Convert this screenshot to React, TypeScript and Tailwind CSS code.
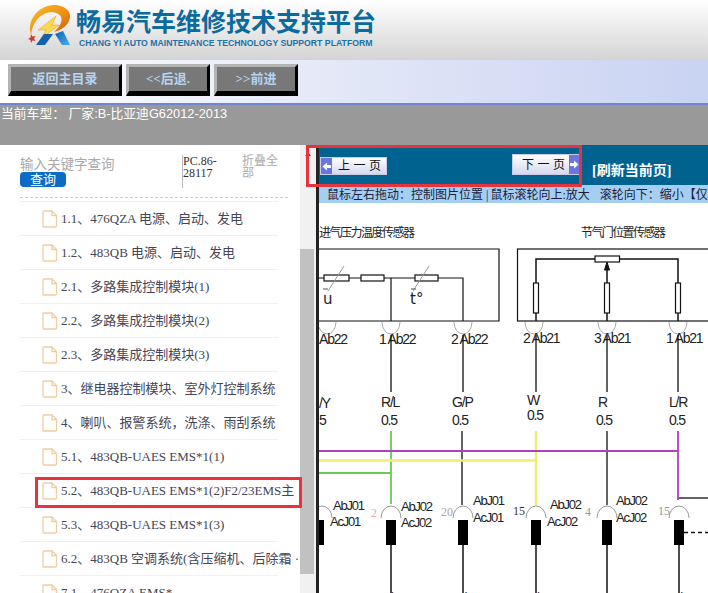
import React from "react";

const items = [
  "1.1、476QZA 电源、启动、发电",
  "1.2、483QB 电源、启动、发电",
  "2.1、多路集成控制模块(1)",
  "2.2、多路集成控制模块(2)",
  "2.3、多路集成控制模块(3)",
  "3、继电器控制模块、室外灯控制系统",
  "4、喇叭、报警系统，洗涤、雨刮系统",
  "5.1、483QB-UAES EMS*1(1)",
  "5.2、483QB-UAES EMS*1(2)F2/23EMS主",
  "5.3、483QB-UAES EMS*1(3)",
  "6.2、483QB 空调系统(含压缩机、后除霜 ·",
  "7.1、476QZA EMS*",
];

const serif = "font-['Liberation_Serif','Noto_Sans_CJK_SC',serif]";

function Logo() {
  return (
    <svg width="50" height="44" viewBox="0 0 50 44" className="shrink-0">
      <defs>
        <linearGradient id="ring" x1="0" y1="0" x2="1" y2="1">
          <stop offset="0" stopColor="#f9c22a" />
          <stop offset="0.6" stopColor="#ee8a12" />
          <stop offset="1" stopColor="#c04f18" />
        </linearGradient>
        <linearGradient id="blue" x1="0" y1="0" x2="1" y2="1">
          <stop offset="0" stopColor="#0b5fb0" />
          <stop offset="1" stopColor="#4bb0ee" />
        </linearGradient>
      </defs>
      <path d="M5 30C0 14 14 0 28 0 38 0 45 6 44 12 43 20 36 25 28 27 33 22 37 17 35 12 33 7 24 6 18 9 10 13 6 21 5 30Z" fill="url(#ring)" />
      <path d="M12 25 30 11 26 20h7L15 34l5-9Z" fill="#fbd84e" stroke="#f2a824" strokeWidth="0.6" />
      <path d="M5 29l1.500 2.500 3-.5-1.500 2.500 1.500 2.500-3-.5-1.500 2.500-.5-3-2.500-1 2.500-1.500Z" fill="#d8392b" />
      <path d="M10 40 18 29h9l-8 11Z" fill="#1460ae" />
      <path d="M29 29l8-3 7 14h-8Z" fill="url(#blue)" />
    </svg>
  );
}

function Button({ label, className }: { label: string; className: string }) {
  return (
    <div
      className={`${className} h-8 flex items-center justify-center bg-[#787878] border-l-[3px] border-t-[3px] border-r-[3px] border-b-[5px] border-l-[#b4b4b4] border-t-[#b4b4b4] border-r-black border-b-black text-[13px] font-bold text-[#b5d3f2] ${serif}`}
    >
      {label}
    </div>
  );
}

function Row({ text }: { text: string }) {
  return (
    <div className="h-[34px] ml-5 w-[258px] flex items-center border-b border-[#f0f0f0]">
      <svg width="16" height="18" viewBox="0 0 16 18" fill="none" stroke="#f2cda0" strokeWidth="1.3" className="ml-[22px] mr-[3px] shrink-0">
        <path d="M2 1h8l4.500 4.500V16a1 1 0 0 1-1 1H2a1 1 0 0 1-1-1V2a1 1 0 0 1 1-1Z" />
        <path d="M10 1v4.500h4.500" />
      </svg>
      <span className={`whitespace-nowrap text-[13px] text-[#454555] ${serif}`}>{text}</span>
    </div>
  );
}

function Diagram() {
  const t = "fill-[#222]";
  const label = (x: number, y: number, s: string, size = 14) => (
    <text x={x} y={y} fontSize={size} letterSpacing={-1.2} fontFamily="'Liberation Sans', sans-serif" className={t}>{s}</text>
  );
  const arcDown = (x: number) => (
    <path d={`M${x - 9} 322a9 12 0 0 0 18 0`} fill="none" stroke="#aaa" />
  );
  const arcUp = (x: number) => (
    <path d={`M${x - 10} 518a10 12 0 0 1 20 0`} fill="none" stroke="#999" />
  );
  const plug = (x: number) => (
    <g key={x}>
      <rect x={x - 5} y={520} width={10} height={25} fill="#000" />
      <path d={`M${x} 545V593`} stroke="#000" strokeWidth={1.4} />
    </g>
  );
  const vres = (x: number) => <rect x={x - 2.500} y={283} width={5} height={30} fill="#fff" stroke="#111" strokeWidth={1.2} />;
  const hres = (a: number, b: number) => <rect x={a} y={275} width={b - a} height={6} fill="#fff" stroke="#111" strokeWidth={1.2} />;
  return (
    <svg viewBox="319 203 389 390" width="389" height="390" className="block">
      <text x="319" y="237" fontSize="12" letterSpacing="-1.5" fontFamily="'Noto Sans CJK SC', sans-serif" className={t}>进气压力温度传感器</text>
      <text x="581" y="237" fontSize="12" letterSpacing="-1.6" fontFamily="'Noto Sans CJK SC', sans-serif" className={t}>节气门位置传感器</text>
      <g fill="none" stroke="#111" strokeWidth="1.200">
        <path d="M318 249H499V321H318" />
        <rect x="517.500" y="249" width="200" height="72" />
        <path d="M318 278H463V321M391 278V321" />
        <path d="M536 321V259H678V321M607 321V265" strokeWidth="1.500" />
      </g>
      {hres(324, 349)}
      {hres(361, 384)}
      {hres(415, 438)}
      <path d="M328 291 344 266M413 291 429 266" stroke="#999" />
      <path d="M323 289h5M411 289h5" stroke="#555" />
      <rect x="595" y="256" width="24.500" height="6" fill="#fff" stroke="#111" strokeWidth="1.200" />
      <path d="M607 262l-2.500 8h5Z" fill="#111" stroke="#111" />
      {vres(536)}
      {vres(607)}
      {vres(678)}
      <text x="323" y="304" fontSize="15" fontFamily="'DejaVu Sans', sans-serif" className={t}>u</text>
      <text x="410" y="304" fontSize="15" fontFamily="'DejaVu Sans', sans-serif" className={t}>t°</text>
      {arcDown(327)}
      {arcDown(391)}
      {arcDown(463)}
      {arcDown(534)}
      {arcDown(607)}
      {arcDown(678)}
      {label(319, 344, "Ab22")}
      {label(379, 344, "1 Ab22")}
      {label(451, 344, "2 Ab22")}
      {label(523, 343, "2 Ab21")}
      {label(594, 343, "3 Ab21")}
      {label(666, 343, "1 Ab21")}
      <g fill="none" stroke="#111" strokeWidth="1.300">
        <path d="M391 335V392M463 335V392M536 335V392M607 335V392M678 335V392" />
        <path d="M462 431V505M607 431V505" />
        <path d="M678 498H708" />
        <path d="M684 532.500H708" strokeDasharray="4 3" />
      </g>
      {label(319, 408, "/Y")}
      {label(319, 425, "5")}
      {label(381, 407, "R/L")}
      {label(381, 425, "0.5")}
      {label(452, 407, "G/P")}
      {label(452, 425, "0.5")}
      {label(527, 405, "W")}
      {label(527, 420, "0.5")}
      {label(598, 407, "R")}
      {label(596, 425, "0.5")}
      {label(669, 407, "L/R")}
      {label(669, 425, "0.5")}
      <path d="M391 431V504M318 473H391" stroke="#66cc55" strokeWidth="1.800" fill="none" />
      <path d="M536 431V505M318 460.500H536" stroke="#f0ee70" strokeWidth="2.500" fill="none" />
      <path d="M678 431V500M318 451H678" stroke="#b040c0" strokeWidth="1.800" fill="none" />
      {arcUp(322)}
      {arcUp(391)}
      {arcUp(463)}
      {arcUp(536)}
      {arcUp(607)}
      {arcUp(679)}
      <rect x="318" y="520" width="6" height="25" fill="#000" />
      {plug(391)}
      {plug(463)}
      {plug(536)}
      {plug(607)}
      {plug(679)}
      {label(333, 510, "AbJ01", 13)}
      {label(330, 526, "AcJ01", 13)}
      {label(401, 511, "AbJ02", 13)}
      {label(401, 527, "AcJ02", 13)}
      {label(473, 505, "AbJ01", 13)}
      {label(473, 522, "AcJ01", 13)}
      {label(550, 509, "AbJ02", 13)}
      {label(547, 526, "AcJ02", 13)}
      {label(616, 505, "AbJ02", 13)}
      {label(616, 522, "AcJ02", 13)}
      <g fontSize="12" fontFamily="'Liberation Serif', serif">
        <text x="371" y="517" fill="#e8a8a0">2</text>
        <text x="441" y="516" fill="#aaa">20</text>
        <text x="513" y="515" fill="#333">15</text>
        <text x="585" y="516" fill="#999">4</text>
        <text x="658" y="515" fill="#999">15</text>
      </g>
      {label(322, 603, "Y")}
      {label(381, 603, "B/L")}
      {label(453, 603, "G/B")}
      {label(527, 603, "Y/")}
      {label(601, 603, "R")}
      {label(672, 603, "L/R")}
    </svg>
  );
}

function Arrow({ left }: { left?: boolean }) {
  return (
    <div className="w-[11px] h-full shrink-0 bg-[#6a75e0] flex items-center justify-center">
      <svg width="9" height="9" viewBox="0 0 9 9" fill="#fff" className={left ? "rotate-180" : ""}>
        <path d="M0 3h4V0.500L8.500 4.500 4 8.500V6H0Z" />
      </svg>
    </div>
  );
}

export default function App() {
  return (
    <div className="relative w-[708px] h-[593px] overflow-hidden bg-white flex flex-col">
      <header className="h-[60px] shrink-0 flex bg-gradient-to-b from-[#ffffff] to-[#d4d4d4] pl-[26px] pt-[5px]">
        <Logo />
        <div className="flex flex-col">
          <div className="text-[25px] leading-[30px] font-bold text-[#0b6a9e] font-['Noto_Sans_CJK_SC',sans-serif] whitespace-nowrap">畅易汽车维修技术支持平台</div>
          <div className="text-[8.700px] leading-[13px] mt-[2px] ml-[3px] font-bold text-[#1a72a8] font-['Liberation_Sans',sans-serif] whitespace-nowrap">CHANG YI AUTO MAINTENANCE TECHNOLOGY SUPPORT PLATFORM</div>
        </div>
      </header>
      <nav className="h-[45px] shrink-0 flex items-start gap-1 pl-2 pt-1 bg-gradient-to-r from-[#ffffff] via-[#e2e7f7] to-[#c9d3f2] border-b-2 border-[#6f86d6]">
        <Button label="返回主目录" className="w-[114px]" />
        <Button label="<<后退." className="w-[84px]" />
        <Button label=">>前进" className="w-[84px]" />
      </nav>
      <div className="h-10 shrink-0 bg-[#999999] pl-px pt-[2px] text-[12.800px] leading-[14px] text-white font-['Liberation_Sans','Noto_Sans_CJK_SC',sans-serif]">
        当前车型： 厂家:B-比亚迪G62012-2013
      </div>
      <main className="flex flex-1 min-h-0">
        <aside className="w-[300px] shrink-0 overflow-hidden">
          <div className="h-[53px] ml-5 w-[268px] flex border-b border-dashed border-[#cccccc]">
            <div className="w-[162px] pt-[13px]">
              <div className={`text-[13.500px] leading-[14px] text-[#aaaaaa] ${serif}`}>输入关键字查询</div>
              <div className={`w-[46px] h-[15px] rounded-[4px] bg-[#0a6cc4] text-white text-[13px] leading-[15px] text-center ${serif}`}>查询</div>
            </div>
            <div className={`w-[60px] h-[33px] mt-[10px] border-l border-[#bbbbbb] text-[12px] leading-[12px] text-[#333333] ${serif}`}>
              PC.86-<br />28117
            </div>
            <div className={`w-[38px] pt-[10px] text-[12px] leading-[12px] text-[#aaaaaa] ${serif}`}>折叠全部</div>
          </div>
          <div className="pt-[3px]">
            <div className="ml-5 w-[258px] border-t border-[#f0f0f0]" />
            {items.map((s) => (
              <Row key={s} text={s} />
            ))}
          </div>
        </aside>
        <div className="w-[16px] shrink-0 bg-[#f1f1f1] relative">
          <div className="absolute left-[5px] top-[7px] w-0 h-0 border-x-[3px] border-x-transparent border-b-[4px] border-b-[#555]" />
          <div className="absolute left-0 top-[104px] w-[14px] h-[325px] bg-[#c1c1c1]" />
        </div>
        <div className="w-[3px] shrink-0 bg-[#222]" />
        <section className="flex-1 min-w-0 flex flex-col">
          <div className="h-10 shrink-0 bg-[#00628f] relative">
            <div className="absolute left-[1px] top-[12px] w-[67px] h-[18px] flex items-center bg-gradient-to-b from-[#ffffff] to-[#d5d9ee] border border-[#c8cce8]">
              <Arrow left />
              <span className={`ml-[6px] text-[12px] text-[#111] tracking-[3.500px] whitespace-nowrap ${serif}`}>上一页</span>
            </div>
            <div className="absolute left-[193px] top-[9px] w-[67px] h-[21px] flex items-center bg-gradient-to-b from-[#ffffff] to-[#d5d9ee] border border-[#c8cce8]">
              <span className={`ml-[9px] text-[12px] text-[#111] tracking-[3.500px] whitespace-nowrap ${serif}`}>下一页</span>
              <div className="ml-auto h-full"><Arrow /></div>
            </div>
            <div className={`absolute left-[273px] top-[15px] text-white text-[14px] font-bold whitespace-nowrap ${serif}`}>[刷新当前页]</div>
          </div>
          <div className={`h-[18px] shrink-0 bg-[#a4cff2] pl-2 flex text-[12px] leading-[20px] text-[#1c1c3a] whitespace-nowrap overflow-hidden ${serif}`}>
            <span>鼠标左右拖动：控制图片位置</span>
            <span className="ml-[3px] mr-[2px]">|</span>
            <span>鼠标滚轮向上:放大</span>
            <span className="ml-[10px]">滚轮向下：缩小</span>
            <span>【仅</span>
          </div>
          <Diagram />
        </section>
      </main>
      <div className="absolute left-[306px] top-[145px] w-[276px] h-[42px] border-[3px] border-[#e8333c]" />
      <div className="absolute left-[35px] top-[477px] w-[267px] h-[31px] border-[3px] border-[#e8333c]" />
    </div>
  );
}
